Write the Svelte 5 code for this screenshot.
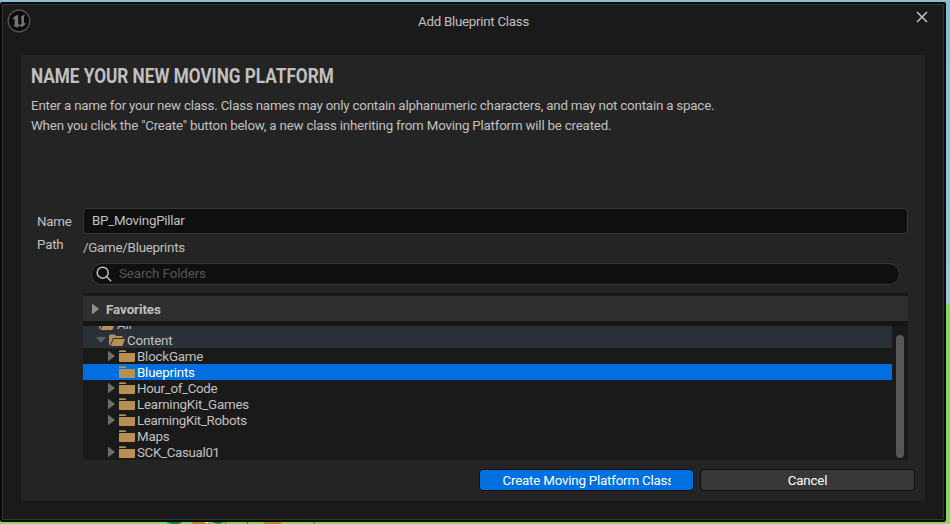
<script>
  const folders = [
    { name: 'BlockGame', arrow: true },
    { name: 'Blueprints', selected: true },
    { name: 'Hour_of_Code', arrow: true, tight: true },
    { name: 'LearningKit_Games', arrow: true },
    { name: 'LearningKit_Robots', arrow: true, tight: true },
    { name: 'Maps' },
    { name: 'SCK_Casual01', arrow: true, tight: true }
  ];
</script>

{#snippet openFolder()}
  <svg class="folder" width="16" height="12" viewBox="0 0 16 12">
    <path d="M0 11V1.500L1 .5h5l1 1.500h6.500V4H4L1 11z" fill="#b98f52" />
    <path d="M4.600 5H16l-2.600 7H1.600z" fill="#b98f52" />
  </svg>
{/snippet}

<div class="desktop">
  <svg class="scenery" width="200" height="2" viewBox="0 0 200 2">
    <path d="M16 0h16l-3 2H21z" fill="#118447" />
    <path d="M42 0h17v2H43z" fill="#b48a2c" />
    <path d="M54 0h5l-2 2z" fill="#ead8c4" />
    <path d="M61 0h13l-5 2z" fill="#118447" />
    <path d="M113 0h18v2h-16z" fill="#b48a2c" />
    <path d="M75 0h1v2h-1zM97 0h1v2h-1zM164 0h1v2h-1z" fill="#6a6a42" />
  </svg>
  <div class="window">
    <div class="frame">
      <header>
        <svg class="logo" width="24" height="24" viewBox="0 0 24 24">
          <circle cx="12" cy="12" r="10.800" fill="#0b0b0b" stroke="#575757" stroke-width="1.300" />
          <path d="M11.300 5.800C8.500 6.300 6 8.300 5.200 11.200c.9-1 1.700-1.500 2.200-1.200.3.200.2.700.2 1v4.200c0 .8-.4 1.100-1.300 1 1.200 1.500 2.900 2.100 4.600 2.100l2.100-1.900 1.300 1.700c2.500-.9 4.100-2.600 4.900-4.700-1 .9-1.700 1.200-2 .9-.2-.2-.2-.5-.2-.9V8.300c0-1 .5-1.800 1.300-2.500-2 .1-3.700 1.200-4.700 2.400.6-.1.8.2.8.8v5.800c-.4.600-1.100 1-1.900 1-.9 0-1.300-.600-1.300-1.500V7.700c0-.8.100-1.300.1-1.900z" fill="#737373" />
        </svg>
        <h1>Add Blueprint Class</h1>
        <svg class="close" width="12" height="12" viewBox="0 0 12 12">
          <path d="M1 1l10 10M11 1L1 11" stroke="#c4c4c4" stroke-width="1.500" />
        </svg>
      </header>
      <main>
        <h2><span>NAME YOUR NEW MOVING PLATFORM</span></h2>
        <p class="l1">Enter a name for your new class. Class names may only contain alphanumeric characters, and may not contain a space.</p>
        <p class="l2">When you click the "Create" button below, a new class inheriting from Moving Platform will be created.</p>
        <section class="form">
          <div class="labels">
            <label for="name">Name</label>
            <div>Path</div>
          </div>
          <div class="fields">
            <div class="input" id="name">BP_MovingPillar</div>
            <div class="path">/Game/Blueprints</div>
            <div class="search">
              <svg width="16" height="16" viewBox="0 0 16 16" fill="none" stroke="#c0c0c0" stroke-width="1.500">
                <circle cx="6.700" cy="6.700" r="5.500" /><path d="M10.700 10.700L15.200 15.200" />
              </svg>
              <span>Search Folders</span>
            </div>
            <div class="favorites">
              <svg width="7" height="10" viewBox="0 0 7 10"><path d="M0 0h.6L7 5 .6 10H0z" fill="#909090" /></svg>
              <b>Favorites</b>
            </div>
            <div class="tree">
              <div class="rows">
                <div class="row tint all">{@render openFolder()}<span>All</span></div>
                <div class="row tint content">
                  <span class="slot"><svg width="10" height="6" viewBox="0 0 10 6"><path d="M0 0h10L5 6z" fill="#5f6163" /></svg></span>
                  {@render openFolder()}<span>Content</span>
                </div>
                {#each folders as f}
                  <div class="row" class:selected={f.selected} class:tight={f.tight}>
                    <span class="slot">
                      {#if f.arrow}<svg width="7" height="10" viewBox="0 0 7 10"><path d="M0 0h.6L7 5 .6 10H0z" fill="#6e6e6e" /></svg>{/if}
                    </span>
                    <svg class="folder" width="16" height="12" viewBox="0 0 16 12">
                      <path d="M0 1L.700.300H6L7.600 2H0zM0 3h15.500l.5.500v8l-.5.500H.5l-.5-.5z" fill="#b98f52" />
                    </svg>
                    <span>{f.name}</span>
                  </div>
                {/each}
              </div>
              <div class="scrollbar"></div>
            </div>
          </div>
        </section>
        <footer>
          <button class="primary"><span>Create Moving Platform Class</span></button>
          <button>Cancel</button>
        </footer>
      </main>
    </div>
  </div>
</div>

<style>
  :global(body) { margin: 0; overflow: hidden; }
  * { box-sizing: border-box; }
  .desktop {
    position: relative; width: 950px; height: 524px; padding: 2px 4px 2px 0;
    background: linear-gradient(#8bbbd4 0, #9bc8dc 304px, #8bd465 305px);
    font: 13.333px/16px Roboto, sans-serif; letter-spacing: -.2px; color: #c0c0c0;
  }
  .scenery { position: absolute; left: 150px; bottom: 0; }
  .window { height: 520px; padding: 2px; background: #0b0b0b; border-radius: 2px; }
  .frame { height: 516px; border: 1px solid #343434; background: #1a1a1a; }
  header { height: 50px; display: flex; align-items: flex-start; justify-content: space-between; padding: 4px 15px 0 4px; }
  h1 { margin: 5px 0 0; font-size: 13.333px; line-height: 16px; font-weight: 400; letter-spacing: -.27px; }
  .close { margin-top: 2px; }
  main { margin-left: 18px; width: 904px; height: 446px; background: #242424; padding: 9px 10px 0; }
  h2 { margin: 0; height: 24px; font-size: 21px; line-height: 24px; white-space: nowrap; letter-spacing: 0; }
  h2 span { display: inline-block; transform-origin: left; transform: scaleX(.818); }
  p { margin: 0; height: 20px; line-height: 20px; white-space: nowrap; }
  .l1 { margin-top: 8px; }
  .form { display: flex; margin-top: 72px; height: 252px; }
  .labels { width: 52px; padding: 6px 0 0 6px; }
  .labels label { display: block; height: 23px; }
  .fields { width: 825px; }
  .input { height: 26px; border: 1px solid #383838; border-radius: 4px; background: #0f0f0f; padding: 4px 8px; letter-spacing: -.25px; }
  .path { margin-top: 5px; height: 24px; line-height: 17px; letter-spacing: -.25px; }
  .search { margin: 0 8px; height: 22px; border: 1px solid #383838; border-radius: 11px; background: #0f0f0f; display: flex; align-items: center; padding-left: 4px; gap: 7px; color: #565656; letter-spacing: -.1px; }
  .favorites { margin-top: 8px; height: 33px; border-top: 3px solid #1a1a1a; border-bottom: 5px solid #151515; background: #2f2f2f; display: flex; align-items: center; padding-left: 9px; gap: 7px; letter-spacing: -.05px; }
  .favorites b { padding-top: 2px; }
  .tree { height: 134px; display: flex; background: #1a1a1a; overflow: hidden; }
  .rows { width: 809px; }
  .row { height: 16px; display: flex; align-items: center; padding-left: 25px; white-space: nowrap; }
  .row > span:last-child { padding-top: 2px; }
  .tight { letter-spacing: -.32px; }
  .tint { background: #2a3037; }
  .all { margin-top: -10px; padding-left: 16px; }
  .content { padding-left: 13px; }
  .slot { width: 11px; display: flex; }
  .content .slot { width: 13px; }
  .folder { margin-right: 2px; }
  .selected { background: #0070e0; color: #fff; }
  .scrollbar { width: 8px; height: 123px; margin: 9px 0 0 4px; border-radius: 4px; background: #575757; }
  footer { display: flex; gap: 6px; justify-content: flex-end; margin-top: 9px; }
  button { width: 215px; height: 22px; border: 1px solid #121212; border-radius: 4px; background: #383838; color: #fff; padding: 1px 0 0; font: 13.333px/20px Roboto, sans-serif; letter-spacing: -.2px; display: flex; justify-content: center; }
  .primary { background: #0070e0; }
  .primary span { width: 168px; height: 20px; overflow: hidden; white-space: nowrap; text-align: left; }
</style>
